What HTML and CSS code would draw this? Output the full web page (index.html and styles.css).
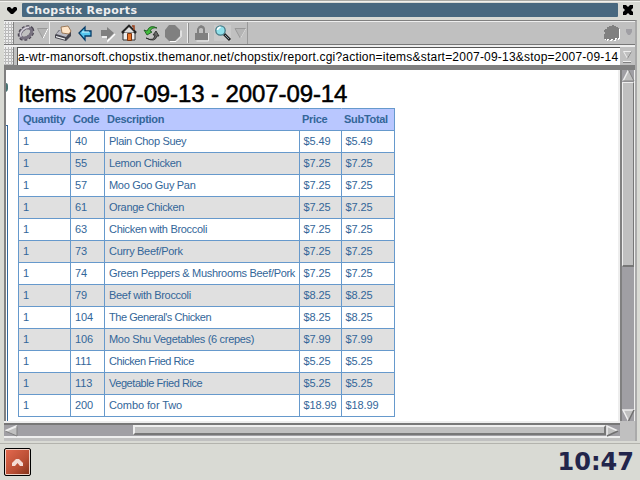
FILE: index.html
```html
<!DOCTYPE html>
<html lang="en">
<head>
<meta charset="utf-8">
<title>Chopstix Reports</title>
<link rel="stylesheet" href="styles.css">
</head>
<body>
<div class="window">
  <header class="titlebar">
    <svg class="win-menu" width="22" height="20"><path d="M7 8l1-1h2l2 2 2-2h2l1 1v2l-4 4h-2l-4-4z"/></svg>
    <div class="title">Chopstix Reports</div>
    <svg class="win-close" width="20" height="20"><path d="M5 5h3l2 2 2-2h3v3l-2 2 2 2v3h-3l-2-2-2 2h-3v-3l2-2-2-2z"/></svg>
  </header>
  <div class="browser">
    <nav class="toolbar">
      <span class="grip"></span>
      <svg class="ic menu-icon" width="35" height="23" viewBox="14 21 35 23">
        <g transform="rotate(-38 26 32)"><ellipse cx="26" cy="32" rx="7" ry="5" fill="none" stroke="#4c4754" stroke-width="4" stroke-dasharray="2.500 1.500"/><ellipse cx="26" cy="32" rx="6.200" ry="4.500" fill="none" stroke="#77717f" stroke-width="3"/><path d="M20 32q0-4 6-4.500 4 0 6 2" fill="none" stroke="#d6d2dc" stroke-width="1.500"/></g>
        <path d="M37.500 27.500h10.500l-5 10z" fill="#b4b4b4" stroke="#999"/><path d="M48 27.500l-5 10" stroke="#fff"/>
      </svg>
      <svg class="ic" width="138" height="23" viewBox="49 21 138 23">
        <path d="M49.500 21v22" stroke="#eee"/>
        <path d="M55 34l4-5 12 2v4l-5 5-11-3z" fill="#45454f"/><path d="M56 33l4-4 10 2-4 5z" fill="#b9b9c2"/><path d="M56 35l9 2.500v1.200l-9-2.500z" fill="#f5f5f5"/><path d="M61 26l7-1 3 5-2 3-7-1z" fill="#ffe5c8" stroke="#8b6540" stroke-width=".8"/>
        <path d="M79 32l6-6v4h6v5h-6v4z" fill="#55c7ef" stroke="#063c68" stroke-width="1.300"/><path d="M82 31h7" stroke="#d3f7ff"/>
        <path d="M102 36h6v4l7-7" fill="none" stroke="#fff" stroke-width="1.500"/><path d="M101 29h6v-3l7 6-7 7v-4h-6z" fill="#808080"/>
        <path d="M123 31h12v8h-12z" fill="#eee" stroke="#343434"/><path d="M122 32l7-7 7 7" fill="none" stroke="#242424" stroke-width="2.500"/><path d="M124 31l5-5 5 5z" fill="#dedede"/><path d="M132 25h2v4" fill="none" stroke="#9b3f19" stroke-width="1.500"/><path d="M127.500 32.500h4v7h-4z" fill="#e87529" stroke="#783410"/>
        <path d="M157 27q-7-4-10 3l-3-1 3 5 5-3-2-1q2-4 7-3z" fill="#42bd3c" stroke="#174e19" stroke-width=".8"/><path d="M146 37q8 4 9-3l-2 0 3-4 3 5-2 0q-2 7-11 2z" fill="#666" stroke="#222" stroke-width=".8"/>
        <path d="M170 40.500h6l5-5v-6" fill="none" stroke="#fff"/><path d="M169 24h6l5 5v6l-5 5h-6l-4-4v-7z" fill="#808080"/>
      </svg>
      <span class="sep"></span>
      <svg class="ic" width="58" height="23" viewBox="189 21 58 23">
        <path d="M208.500 32v8h-12" fill="none" stroke="#eee"/><path d="M195 32h2v-4q1-3 4-4q4 1 4 4v4h3v7h-13z" fill="#808080"/><path d="M199 32v-4q2-2 4 0v4z" fill="#c0c0c0"/>
        <path d="M214 24h17v16h-17z" fill="#cacaca"/><path d="M224 33l6 6" stroke="#222" stroke-width="3"/><path d="M225 34l4 4" stroke="#879fab"/><circle cx="220.500" cy="29.500" r="4.700" fill="#8fe0ea" stroke="#477a86" stroke-width="1.300"/><path d="M217.500 29q0-2 3-3" stroke="#fff" stroke-width="1.500" fill="none"/>
        <path d="M235 27.500h11l-5.500 10z" fill="#b4b4b4" stroke="#999"/><path d="M246 27.500l-5.500 10" stroke="#ddd"/>
      </svg>
      <span class="toolbar-end"></span>
      <svg class="ic throbber" width="32" height="23" viewBox="603 21 32 23">
        <path id="rock" d="M604 29h1v-1h2v-2h2v-1h3v-1h2v1h2v1h2v1h1v10h-1v1h-1v-1h-2v2h-2v-1h-2v1h-2v-1h-2v1h-1v-1h-2v-5h1v-2h-1z" fill="#fff" transform="translate(1 1)"/><path d="M604 29h1v-1h2v-2h2v-1h3v-1h2v1h2v1h2v1h1v10h-1v1h-1v-1h-2v2h-2v-1h-2v1h-2v-1h-2v1h-1v-1h-2v-5h1v-2h-1z" fill="#808080"/><path d="M626 28h6v3l-2 3h-2l-2-3z" fill="#a09fa4"/>
      </svg>
    </nav>
    <div class="location">
      <span class="grip"></span>
      <div class="url"><span>a-wtr-manorsoft.chopstix.themanor.net/chopstix/report.cgi?action=items&amp;start=2007-09-13&amp;stop=2007-09-14</span></div>
      <svg class="url-menu" width="15" height="19"><path d="M3.500 4.500h8l-4 7z" fill="#c0c0c0" stroke="#eee"/><path d="M11.500 4.500l-4 7M3 15.500h8" stroke="#808080"/><path d="M3 14.500h8" stroke="#eee"/></svg>
    </div>
    <div class="viewport">
      <main class="page">
        <div class="margin-mark"><svg width="3" height="56"><path d="M0 13q2 0 2 3v3q0 2-2 3z" fill="#4a7474"/><path d="M0 55.500h2" stroke="#336699"/></svg><i></i></div>
        <div class="report">
          <h1><span>Items 2007-09-13 - 2007-09-14</span></h1>
          <table>
            <colgroup><col class="c-qty"><col class="c-code"><col class="c-desc"><col class="c-price"><col class="c-sub"></colgroup>
            <thead><tr><th>Quantity</th><th>Code</th><th>Description</th><th>Price</th><th>SubTotal</th></tr></thead>
            <tbody>
              <tr><td>1</td><td>40</td><td>Plain Chop Suey</td><td>$5.49</td><td>$5.49</td></tr>
              <tr><td>1</td><td>55</td><td>Lemon Chicken</td><td>$7.25</td><td>$7.25</td></tr>
              <tr><td>1</td><td>57</td><td>Moo Goo Guy Pan</td><td>$7.25</td><td>$7.25</td></tr>
              <tr><td>1</td><td>61</td><td>Orange Chicken</td><td>$7.25</td><td>$7.25</td></tr>
              <tr><td>1</td><td>63</td><td>Chicken with Broccoli</td><td>$7.25</td><td>$7.25</td></tr>
              <tr><td>1</td><td>73</td><td>Curry Beef/Pork</td><td>$7.25</td><td>$7.25</td></tr>
              <tr><td>1</td><td>74</td><td>Green Peppers &amp; Mushrooms Beef/Pork</td><td>$7.25</td><td>$7.25</td></tr>
              <tr><td>1</td><td>79</td><td>Beef with Broccoli</td><td>$8.25</td><td>$8.25</td></tr>
              <tr><td>1</td><td>104</td><td class="tight">The General's Chicken</td><td>$8.25</td><td>$8.25</td></tr>
              <tr><td>1</td><td>106</td><td>Moo Shu Vegetables (6 crepes)</td><td>$7.99</td><td>$7.99</td></tr>
              <tr><td>1</td><td>111</td><td class="tight">Chicken Fried Rice</td><td>$5.25</td><td>$5.25</td></tr>
              <tr><td>1</td><td>113</td><td class="tight">Vegetable Fried Rice</td><td>$5.25</td><td>$5.25</td></tr>
              <tr><td>1</td><td>200</td><td class="loose">Combo for Two</td><td>$18.99</td><td>$18.99</td></tr>
            </tbody>
          </table>
        </div>
      </main>
      <div class="vscroll">
        <svg width="13" height="12"><path d="M6.500 0L12 11H1z" fill="#c0c0c0"/><path d="M6.500 0L1 11" stroke="#eee" stroke-width="1.500"/><path d="M6.500 0L12 11H1" fill="none" stroke="#808080"/></svg>
        <div class="vthumb"></div><div class="fill"></div>
        <svg width="13" height="12"><path d="M1 1h11L6.500 12z" fill="#c0c0c0"/><path d="M12 1H1l5.500 11" fill="none" stroke="#eee" stroke-width="1.500"/><path d="M12 1L6.500 12" stroke="#707070" stroke-width="1.500"/></svg>
      </div>
    </div>
    <div class="hscroll">
      <svg width="13" height="12"><path d="M0 6L12 1v10z" fill="#c0c0c0"/><path d="M0 6L12 1" stroke="#eee" stroke-width="2"/><path d="M0 6l12 5V1" fill="none" stroke="#808080"/></svg>
      <div class="hgap"></div><div class="hthumb"></div>
      <svg width="13" height="12"><path d="M1 1v10l11-5z" fill="#c0c0c0"/><path d="M1 11V1l11 5" fill="none" stroke="#eee" stroke-width="1.500"/><path d="M1 11l11-5" stroke="#707070" stroke-width="1.500"/></svg>
    </div>
  </div>
</div>
<footer class="taskbar">
  <div class="launcher"><svg width="11" height="9"><path d="M0 5l4-4h3l4 4v3H8L5.500 5 3 8H0z" fill="#f5dcd5"/></svg></div>
  <time>10:47</time>
</footer>
</body>
</html>
```
FILE: styles.css
```css
* { box-sizing: border-box; }
body { margin: 0; width: 640px; height: 480px; overflow: hidden; background: #d9dad4; font-family: "Liberation Sans", sans-serif; }
svg { display: block; flex: none; }
.window { height: 444px; border-top: 1px solid #aaaaa5; border-bottom: 1px solid #b3b3ad; }
.titlebar { display: flex; height: 19px; border-top: 1px solid #f2f2ee; }
.titlebar svg { margin-top: -2px; }
.title { width: 596px; height: 14px; margin-top: 1px; padding-left: 4px; background: #48687f; border-radius: 1px; color: #eee; font: bold 11px/15px "DejaVu Sans", sans-serif; letter-spacing: .3px; }
.browser { width: 633px; height: 421px; margin-left: 4px; border-top: 1px solid #808080; border-right: 2px solid #aaa; background: #c0c0c0; }
.toolbar { display: flex; height: 24px; border-top: 1px solid #eee; border-bottom: 1px solid #777; }
.grip { flex: none; width: 10px; border-right: 1px solid #808080; background: radial-gradient(circle at 1px 1px, #eee 0 1px, #999 1px 1.5px, transparent 1.6px) 2px 3px / 3px 3px #c0c0c0; }
.sep { width: 2px; margin: 1px 0; border-left: 1px solid #eee; background: #909090; }
.toolbar-end { flex: 1; border-left: 1px solid #999; }
.location { display: flex; height: 20px; border-top: 2px solid #eee; }
.url { width: 603px; height: 18px; margin-left: 3px; border-top: 1px solid #555; border-left: 1px solid #555; background: #fff; font-size: 12px; line-height: 19px; white-space: nowrap; }
.url span { letter-spacing: .21px; }
.viewport { display: flex; height: 356px; border-top: 5px solid #808080; border-left: 2px solid #808080; }
.page { display: flex; width: 612px; background: #fff; }
.margin-mark { width: 12px; }
.margin-mark i { display: block; width: 2px; height: 295px; border-right: 1px solid #336699; }
.report { width: 377px; }
h1 { height: 38px; margin: 0; padding-top: 9px; font-size: 24px; line-height: 30px; font-weight: normal; letter-spacing: -.1px; white-space: nowrap; -webkit-text-stroke: .5px #000; }
table { width: 377px; table-layout: fixed; border-spacing: 0; border-right: 1px solid #6699cc; border-bottom: 1px solid #6699cc; color: #336699; font-size: 11px; }
.c-qty { width: 52px; } .c-code { width: 34px; } .c-desc { width: 195px; } .c-price { width: 42px; } .c-sub { width: 53px; }
th, td { height: 22px; padding: 0 0 0 4px; border-top: 1px solid #6699cc; border-left: 1px solid #6699cc; line-height: 21px; text-align: left; white-space: nowrap; }
th { padding-left: 2px; background: #b9c7ff; border-left-color: #b9c7ff; letter-spacing: -.3px; }
th:first-child { padding-left: 4px; border-left-color: #6699cc; }
td { letter-spacing: -.1px; }
td:nth-child(3) { letter-spacing: -.31px; }
td.tight:nth-child(3) { letter-spacing: -.45px; }
td.loose:nth-child(3) { letter-spacing: -.1px; }
td:nth-child(n+4) { padding-left: 3.500px; }
tbody tr:nth-child(even) { background: #e0e0e0; }
.vscroll { display: flex; flex-direction: column; width: 17px; padding-left: 2px; border-left: 2px solid #eee; background: linear-gradient(90deg, #808080 2px, #a09fa4 2px 14px, #eee 14px); }
.vthumb { width: 12px; height: 185px; border: 1px solid #eee; border-right: 1px solid #777; border-bottom: 2px solid #777; background: #c0c0c0; }
.fill { flex: 1; }
.hscroll { display: flex; width: 616px; height: 17px; padding: 2px 1px 1px; border-top: 2px solid #eee; border-bottom: 2px solid #eee; background: linear-gradient(#777 2px, #a09fa4 2px); }
.hgap { width: 115px; }
.hthumb { width: 473px; border: 2px solid #eee; border-right-color: #777; border-bottom-color: #777; background: #c0c0c0; }
.taskbar { display: flex; justify-content: space-between; height: 36px; padding: 4px 6px 0 4px; }
.launcher { display: flex; align-items: center; justify-content: center; width: 27px; height: 28px; border: 1px solid #000; border-radius: 2px; box-shadow: inset 0 0 0 1px #eed1c7; background: linear-gradient(135deg, #e56a50, #b94e34 60%, #803018); }
time { color: #22254b; font: bold 24px/28px "DejaVu Sans", sans-serif; }
```
